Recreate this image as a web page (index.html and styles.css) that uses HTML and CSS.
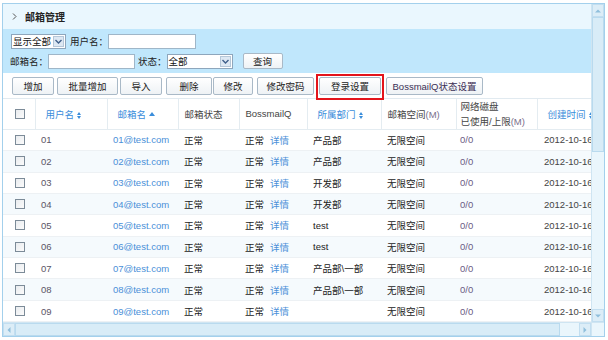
FILE: index.html
```html
<!DOCTYPE html>
<html lang="zh-CN">
<head>
    <meta charset="UTF-8">
    <title>邮箱管理</title>
    <link rel="stylesheet" href="styles.css">
</head>
<body>
    <div class="panel">
        <div class="main">
            <div class="title-bar">
                <svg class="title-arrow" width="5" height="7" viewBox="0 0 5 7"><path d="M1 0.5 L4 3.5 L1 6.5" fill="none" stroke="#555" stroke-width="1"/></svg>
                <span>邮箱管理</span>
            </div>

            <div class="filters">
                <div class="filter-row">
                    <span class="select select-show">
                        <span class="select-text">显示全部</span>
                        <span class="select-btn"><svg width="7" height="5" viewBox="0 0 7 5"><path d="M0.5 1 L3.5 4 L6.5 1" fill="none" stroke="#3f5f8a" stroke-width="1.4"/></svg></span>
                    </span>
                    <span class="label label-user">用户名：</span>
                    <span class="input input-user"></span>
                </div>
                <div class="filter-row">
                    <span class="label">邮箱名：</span>
                    <span class="input input-mail"></span>
                    <span class="label label-status">状态：</span>
                    <span class="select select-status">
                        <span class="select-text">全部</span>
                        <span class="select-btn"><svg width="7" height="5" viewBox="0 0 7 5"><path d="M0.5 1 L3.5 4 L6.5 1" fill="none" stroke="#3f5f8a" stroke-width="1.4"/></svg></span>
                    </span>
                    <button class="btn btn-query">查询</button>
                </div>
            </div>

            <div class="toolbar">
                <button class="btn">增加</button>
                <button class="btn btn-batch">批量增加</button>
                <button class="btn btn-import">导入</button>
                <button class="btn btn-delete">删除</button>
                <button class="btn btn-edit">修改</button>
                <button class="btn btn-pwd">修改密码</button>
                <span class="highlight"><button class="btn btn-login">登录设置</button></span>
                <button class="btn btn-status">BossmailQ状态设置</button>
            </div>

            <div class="grid-view">
                <table class="grid">
                    <colgroup>
                        <col style="width: 32px">
                        <col style="width: 72px">
                        <col style="width: 71px">
                        <col style="width: 61px">
                        <col style="width: 68px">
                        <col style="width: 74px">
                        <col style="width: 75px">
                        <col style="width: 81px">
                        <col style="width: 106px">
                    </colgroup>
                    <thead>
                        <tr>
                            <th class="check-cell"><span class="checkbox"></span></th>
                            <th class="sortable">用户名<span class="sort-both"></span></th>
                            <th class="sortable">邮箱名<span class="sort-up"></span></th>
                            <th>邮箱状态</th>
                            <th>BossmailQ</th>
                            <th class="sortable">所属部门<span class="sort-both"></span></th>
                            <th>邮箱空间<span class="unit">(M)</span></th>
                            <th class="two-line">网络磁盘<br>已使用/上限<span class="unit">(M)</span></th>
                            <th class="sortable">创建时间<span class="sort-both"></span></th>
                        </tr>
                    </thead>
                    <tbody>
                        <tr><td class="check-cell"><span class="checkbox"></span></td><td class="user">01</td><td><a class="link">01@test.com</a></td><td>正常</td><td>正常<a class="link detail">详情</a></td><td>产品部</td><td>无限空间</td><td class="disk">0/0</td><td class="date">2012-10-16</td></tr>
                        <tr><td class="check-cell"><span class="checkbox"></span></td><td class="user">02</td><td><a class="link">02@test.com</a></td><td>正常</td><td>正常<a class="link detail">详情</a></td><td>产品部</td><td>无限空间</td><td class="disk">0/0</td><td class="date">2012-10-16</td></tr>
                        <tr><td class="check-cell"><span class="checkbox"></span></td><td class="user">03</td><td><a class="link">03@test.com</a></td><td>正常</td><td>正常<a class="link detail">详情</a></td><td>开发部</td><td>无限空间</td><td class="disk">0/0</td><td class="date">2012-10-16</td></tr>
                        <tr><td class="check-cell"><span class="checkbox"></span></td><td class="user">04</td><td><a class="link">04@test.com</a></td><td>正常</td><td>正常<a class="link detail">详情</a></td><td>开发部</td><td>无限空间</td><td class="disk">0/0</td><td class="date">2012-10-16</td></tr>
                        <tr><td class="check-cell"><span class="checkbox"></span></td><td class="user">05</td><td><a class="link">05@test.com</a></td><td>正常</td><td>正常<a class="link detail">详情</a></td><td>test</td><td>无限空间</td><td class="disk">0/0</td><td class="date">2012-10-16</td></tr>
                        <tr><td class="check-cell"><span class="checkbox"></span></td><td class="user">06</td><td><a class="link">06@test.com</a></td><td>正常</td><td>正常<a class="link detail">详情</a></td><td>test</td><td>无限空间</td><td class="disk">0/0</td><td class="date">2012-10-16</td></tr>
                        <tr><td class="check-cell"><span class="checkbox"></span></td><td class="user">07</td><td><a class="link">07@test.com</a></td><td>正常</td><td>正常<a class="link detail">详情</a></td><td>产品部\一部</td><td>无限空间</td><td class="disk">0/0</td><td class="date">2012-10-16</td></tr>
                        <tr><td class="check-cell"><span class="checkbox"></span></td><td class="user">08</td><td><a class="link">08@test.com</a></td><td>正常</td><td>正常<a class="link detail">详情</a></td><td>产品部\一部</td><td>无限空间</td><td class="disk">0/0</td><td class="date">2012-10-16</td></tr>
                        <tr><td class="check-cell"><span class="checkbox"></span></td><td class="user">09</td><td><a class="link">09@test.com</a></td><td>正常</td><td>正常<a class="link detail">详情</a></td><td></td><td>无限空间</td><td class="disk">0/0</td><td class="date">2012-10-16</td></tr>
                    </tbody>
                </table>
            </div>

            <div class="hscroll">
                <span class="scroll-btn"><svg width="4" height="6" viewBox="0 0 4 6"><path d="M3.5 0 L0.5 3 L3.5 6 Z" fill="#8fbfdc"/></svg></span>
                <span class="hscroll-thumb"></span>
                <span class="hscroll-track"></span>
                <span class="scroll-btn"><svg width="4" height="6" viewBox="0 0 4 6"><path d="M0.5 0 L3.5 3 L0.5 6 Z" fill="#8fbfdc"/></svg></span>
            </div>
        </div>

        <div class="vscroll">
            <span class="scroll-btn scroll-btn-up"><svg width="6" height="4" viewBox="0 0 6 4"><path d="M0 3.5 L3 0.5 L6 3.5 Z" fill="#8fbfdc"/></svg></span>
            <span class="vscroll-thumb"></span>
            <span class="vscroll-track"></span>
            <span class="scroll-btn scroll-btn-down"><svg width="6" height="4" viewBox="0 0 6 4"><path d="M0 0.5 L3 3.5 L6 0.5 Z" fill="#8fbfdc"/></svg></span>
            <span class="scroll-corner"></span>
        </div>
    </div>
</body>
</html>
```

FILE: styles.css
```css
body {
    margin: 0;
    background: #fff;
    font-family: "Liberation Sans", "Noto Sans CJK SC", sans-serif;
    font-size: 9.5px;
    color: #333;
}
.panel {
    display: flex;
    width: 601px;
    height: 332px;
    margin: 3px 0 0 2px;
    border: 1px solid #a3d0ec;
}
.main {
    width: 589px;
    display: flex;
    flex-direction: column;
    overflow: hidden;
}

/* title */
.title-bar {
    height: 25px;
    display: flex;
    align-items: center;
    gap: 8px;
    padding-left: 9px;
    background: #eaf7fe;
    font-size: 10px;
    font-weight: bold;
    color: #222;
}

/* filters */
.filters {
    height: 44px;
    box-sizing: border-box;
    padding: 5px 0 0 8px;
    background: #c0e7fc;
    display: flex;
    flex-direction: column;
    gap: 5px;
}
.filter-row {
    display: flex;
    align-items: center;
    height: 15px;
    white-space: nowrap;
}
.filter-row + .filter-row {
    margin-left: -1px;
}
.label {
    color: #222;
}
.label-user {
    margin: 0 0 0 4px;
}
.label-status {
    margin: 0 0 0 3px;
}
.input {
    display: block;
    height: 15px;
    box-sizing: border-box;
    background: #fff;
    border: 1px solid #9fb6c8;
}
.input-user {
    width: 88px;
}
.input-mail {
    width: 87px;
}
.select {
    display: flex;
    height: 15px;
    box-sizing: border-box;
    background: #fff;
    border: 1px solid #8ea6bc;
    overflow: hidden;
}
.select-text {
    flex: 1;
    padding-left: 1px;
    line-height: 13px;
    color: #111;
    white-space: nowrap;
    overflow: hidden;
}
.select-btn {
    flex: none;
    width: 9px;
    display: flex;
    align-items: center;
    justify-content: center;
    margin: 1px;
    border: 1px solid #b5c7d8;
    background: #dde8f3;
}
.select-show {
    width: 55px;
}
.select-status {
    width: 66px;
}
.btn {
    width: 42px;
    height: 18px;
    padding: 0;
    box-sizing: border-box;
    font-family: inherit;
    font-size: 9.5px;
    color: #222;
    background: linear-gradient(#ffffff, #eef2f5);
    border: 1px solid #a9b9c7;
    border-radius: 2px;
    white-space: nowrap;
}
.btn-query {
    width: 40px;
    height: 16px;
    margin: -1px 0 0 10px;
}

/* toolbar */
.toolbar {
    height: 25px;
    box-sizing: border-box;
    display: flex;
    align-items: flex-start;
    gap: 3px;
    padding: 4px 0 0 9px;
    background: #fff;
}
.btn-batch {
    width: 61px;
}
.btn-import {
    margin-left: -1px;
}
.btn-delete {
    width: 46px;
    margin-left: 1px;
}
.btn-edit {
    width: 40px;
    margin-left: -2px;
}
.btn-pwd {
    width: 57px;
    margin-left: 1px;
}
.btn-login {
    width: 62px;
}
.btn-status {
    width: 97px;
    color: #3a2f55;
}
.highlight {
    position: relative;
    margin: 0 2px;
}
.highlight::after {
    content: "";
    position: absolute;
    top: -3px;
    left: -3px;
    right: -3px;
    bottom: -5px;
    border: 2px solid #e3141b;
}

/* grid */
.grid-view {
    height: 225px;
    overflow: hidden;
    border-top: 1px solid #e1eaf0;
    box-sizing: border-box;
}
.grid {
    width: 640px;
    table-layout: fixed;
    border-collapse: collapse;
}
.grid th {
    height: 30px;
    padding: 0 0 0 6px;
    text-align: left;
    font-weight: normal;
    color: #444;
    border-right: 1px solid #e4ecf1;
    border-bottom: 1px solid #e4ecf1;
    white-space: nowrap;
}
.grid th.sortable {
    padding-left: 10px;
    color: #3a8ddb;
}
.grid th.two-line {
    line-height: 15px;
    padding-left: 4px;
}
.unit {
    color: #7a6f8c;
}
.grid td {
    height: 21.4px;
    box-sizing: border-box;
    padding: 0 0 0 6px;
    color: #222;
    border-bottom: 1px solid #edf1f4;
    white-space: nowrap;
}
.grid tbody tr:nth-child(even) td {
    background: #f5fafd;
}
.grid .check-cell {
    padding-left: 12px;
}
.checkbox {
    display: block;
    width: 10px;
    height: 10px;
    box-sizing: border-box;
    border: 1px solid #7c8b98;
    background: linear-gradient(135deg, #e9ecef, #fbfbfb);
}
.grid td.user {
    color: #5a5566;
}
.link {
    color: #4a8fd8;
}
.detail {
    margin-left: 6px;
}
.grid td.disk {
    color: #6b5c85;
    padding-left: 4px;
}
.grid td.date {
    color: #444;
    padding-left: 7px;
}
.sort-both,
.sort-up {
    display: inline-block;
    margin-left: 3px;
    vertical-align: middle;
    position: relative;
}
.sort-both {
    width: 5px;
    height: 7px;
}
.sort-both::before,
.sort-both::after {
    content: "";
    position: absolute;
    left: 0;
    border-left: 2.5px solid transparent;
    border-right: 2.5px solid transparent;
}
.sort-both::before {
    top: 0;
    border-bottom: 3px solid #3a8ddb;
}
.sort-both::after {
    bottom: 0;
    border-top: 3px solid #3a8ddb;
}
.sort-up {
    width: 0;
    height: 0;
    margin-top: -2px;
    border-left: 3.5px solid transparent;
    border-right: 3.5px solid transparent;
    border-bottom: 4px solid #3a8ddb;
}

/* scrollbars */
.hscroll {
    height: 13px;
    display: flex;
    background: #eaf6fc;
    border-top: 1px solid #cfe5f2;
}
.scroll-btn {
    display: flex;
    align-items: center;
    justify-content: center;
    background: #dcedf7;
    border: 1px solid #c2def0;
    box-sizing: border-box;
}
.hscroll .scroll-btn {
    width: 12px;
}
.hscroll-thumb {
    width: 545px;
    background: #d8ecf7;
    border: 1px solid #b9daee;
    box-sizing: border-box;
}
.hscroll-track {
    flex: 1;
}
.vscroll {
    width: 12px;
    display: flex;
    flex-direction: column;
    background: #eaf6fc;
    border-left: 1px solid #cfe5f2;
}
.vscroll .scroll-btn {
    height: 13px;
}
.scroll-btn-down {
    height: 11px;
}
.vscroll-thumb {
    height: 135px;
    background: #d8ecf7;
    border: 1px solid #b9daee;
    box-sizing: border-box;
}
.vscroll-track {
    flex: 1;
}
.scroll-corner {
    height: 13px;
    background: #eaf6fc;
    border-top: 1px solid #cfe5f2;
}
```
